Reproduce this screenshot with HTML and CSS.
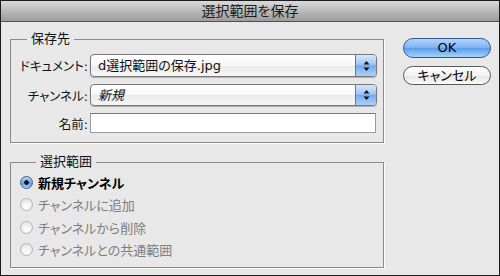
FILE: index.html
```html
<!DOCTYPE html>
<html lang="ja">
<head>
  <meta charset="UTF-8">
  <title>選択範囲を保存</title>
  <link rel="stylesheet" href="styles.css">
</head>
<body>
  <div class="dialog">
    <div class="titlebar">選択範囲を保存</div>
    <div class="main">
      <div class="groups">
        <fieldset class="group group-dest">
          <legend>保存先</legend>
          <div class="row">
            <span class="label">ドキュメント:</span>
            <div class="popup popup-doc">
              <span class="popup-text">d選択範囲の保存.jpg</span>
              <span class="stepper">
                <svg width="7" height="12" viewBox="0 0 7 12"><path d="M3.5 1 L6.5 4.5 L0.5 4.5 Z M3.5 11 L6.5 7.5 L0.5 7.5 Z" fill="#111"/></svg>
              </span>
            </div>
          </div>
          <div class="row">
            <span class="label">チャンネル:</span>
            <div class="popup popup-ch">
              <span class="popup-text italic">新規</span>
              <span class="stepper">
                <svg width="7" height="12" viewBox="0 0 7 12"><path d="M3.5 1 L6.5 4.5 L0.5 4.5 Z M3.5 11 L6.5 7.5 L0.5 7.5 Z" fill="#111"/></svg>
              </span>
            </div>
          </div>
          <div class="row">
            <span class="label">名前:</span>
            <div class="field"></div>
          </div>
        </fieldset>
        <fieldset class="group group-sel">
          <legend>選択範囲</legend>
          <div class="radio checked"><span class="knob"></span>新規チャンネル</div>
          <div class="radio disabled"><span class="knob"></span>チャンネルに追加</div>
          <div class="radio disabled"><span class="knob"></span>チャンネルから削除</div>
          <div class="radio disabled"><span class="knob"></span>チャンネルとの共通範囲</div>
        </fieldset>
      </div>
      <div class="buttons">
        <div class="btn btn-ok">OK</div>
        <div class="btn btn-cancel">キャンセル</div>
      </div>
    </div>
  </div>
</body>
</html>
```

FILE: styles.css
```css
* {
  padding: 0;
  margin: 0;
  box-sizing: border-box;
}
body {
  width: 500px;
  height: 276px;
  font-family: "DejaVu Sans", "Noto Sans CJK JP", sans-serif;
  font-size: 12.5px;
  color: #111;
  font-feature-settings: "palt";
}
.dialog {
  width: 500px;
  height: 276px;
  border: 1px solid #1c1c1c;
  background-color: #e8e8e8;
}
.titlebar {
  height: 21px;
  line-height: 20px;
  text-align: center;
  font-size: 14px;
  color: #1a1a1a;
  border-bottom: 1px solid #505050;
  background: linear-gradient(#dadada, #b9b9b9 50%, #9d9d9d);
}
.main {
  display: flex;
  padding: 9px 0 0 9px;
}
.groups {
  width: 374px;
}
.group {
  border: 1px solid #8a8a8a;
  box-shadow: 1px 1px 0 #fff;
  min-width: 0;
}
.group legend {
  margin-left: 16px;
  padding: 0 4px;
  font-size: 13px;
  line-height: 16px;
}
.group-dest {
  padding: 7px 6px 9px 0;
}
.group-sel {
  margin-top: 11px;
  padding: 1px 6px 6px 9px;
}
.row {
  display: flex;
  align-items: center;
  margin-bottom: 7px;
}
.row:last-child {
  margin-bottom: 0;
}
.label {
  width: 77px;
  margin-right: 2px;
  text-align: right;
  white-space: nowrap;
}
.popup {
  flex: 1;
  display: flex;
  height: 23px;
  border: 1px solid #777;
  border-radius: 4px;
  background: linear-gradient(#ffffff, #f7f7f7 50%, #ebebeb 52%, #f6f6f6);
  box-shadow: 0 1px 1px rgba(0, 0, 0, .25);
  overflow: hidden;
}
.popup-ch {
  height: 22px;
}
.popup-text {
  flex: 1;
  padding-left: 7px;
  line-height: 21px;
  font-size: 13px;
  white-space: nowrap;
}
.italic {
  font-style: italic;
}
.stepper {
  width: 21px;
  display: flex;
  align-items: center;
  justify-content: center;
  border-left: 1px solid #5577aa;
  background: linear-gradient(#d6e8fc, #9fc6f5 45%, #74aaee 52%, #a9d3fb);
}
.field {
  flex: 1;
  height: 20px;
  margin-right: 1px;
  background-color: #fff;
  border: 1px solid #9a9a9a;
  border-top-color: #777;
}
.radio {
  display: flex;
  align-items: center;
  height: 22.5px;
  font-size: 13px;
}
.radio .knob {
  width: 13px;
  height: 13px;
  margin-right: 5px;
  border-radius: 50%;
  border: 1px solid #b4b4b4;
  background: radial-gradient(circle at 50% 70%, #ffffff, #ececec 60%, #dcdcdc);
}
.radio.checked {
  font-weight: bold;
  color: #000;
}
.radio.checked .knob {
  border-color: #3a5f96;
  background: radial-gradient(circle, #111 0, #111 2px, transparent 2.5px),
    linear-gradient(#b9d6f8, #74a9ee 50%, #5b97e8 55%, #a6d2fb);
}
.radio.disabled {
  color: #7e7e7e;
}
.buttons {
  width: 88px;
  margin: 7px 0 0 19px;
}
.btn {
  height: 20px;
  line-height: 18px;
  text-align: center;
  font-size: 13px;
  border-radius: 10px;
  color: #000;
}
.btn-ok {
  border: 1px solid #2f5894;
  background: linear-gradient(#b5d5fa, #7cb2f1 48%, #5f9cea 52%, #a5d3fc);
}
.btn-cancel {
  height: 19px;
  line-height: 17px;
  margin-top: 8px;
  border: 1px solid #5a5a5a;
  background: linear-gradient(#ffffff, #f2f2f2 50%, #e4e4e4 52%, #fbfbfb);
}
```
